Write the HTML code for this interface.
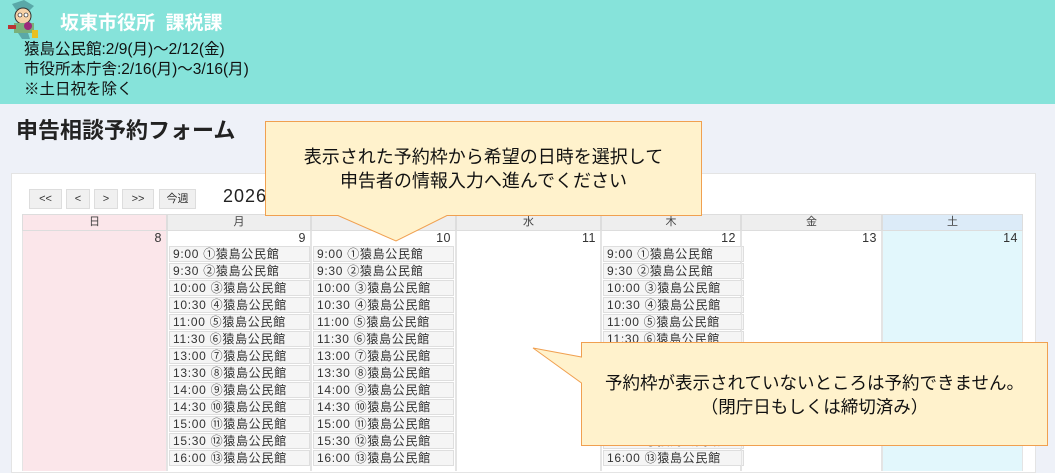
<!DOCTYPE html>
<html><head><meta charset="utf-8"><style>
*{margin:0;padding:0;box-sizing:border-box}
body{width:1055px;height:468px;overflow:hidden;background:#eef1f8;font-family:"Liberation Sans","Noto Sans CJK JP",sans-serif;position:relative}
.abs{position:absolute}
#hdr{left:0;top:0;width:1055px;height:104px;background:#86e3da}
.h1{left:60px;top:8px;color:#fff;font-size:19px;font-weight:bold;white-space:pre}
.sub{left:24px;font-size:15.5px;color:#111;line-height:20px}
.title{left:16px;top:113px;font-size:22px;font-weight:bold;color:#222}
#panel{left:11px;top:173px;width:1025px;height:300px;background:#fff;border:1px solid #e4e4e4}
.btn{top:189px;height:20px;background:#f0f0f0;border:1px solid #ddd;font-size:11px;color:#333;text-align:center;line-height:18px}
.hd{top:214px;height:17px;border:1px solid #ddd;background:#eee;font-size:11px;color:#444;text-align:center;line-height:15px}
.day{top:231px;height:240px;border-left:1px solid #e4e4e4;border-right:1px solid #e4e4e4}
.num{position:absolute;right:4px;top:0;font-size:12.5px;color:#333;line-height:14px;letter-spacing:0.5px}
.slot{position:absolute;left:1px;width:141px;height:16px;background:#f5f5f5;border:1px solid #dedede;font-size:12px;color:#333;line-height:14px;padding-left:3px;white-space:nowrap;letter-spacing:0.7px}
</style></head><body>
<div id="hdr" class="abs"></div>
<svg class="abs" style="left:4px;top:0" width="38" height="40" viewBox="0 0 38 40">
<path d="M8 4 L20 0 L30 6 L26 10 L12 10Z" fill="#5aa8a8"/>
<circle cx="19" cy="16" r="8" fill="#f6d2a8" stroke="#333" stroke-width="1"/>
<circle cx="16" cy="15" r="2" fill="#fff" stroke="#000" stroke-width=".6"/><circle cx="22" cy="15" r="2" fill="#fff" stroke="#000" stroke-width=".6"/>
<rect x="10" y="23" width="20" height="10" fill="#7ab07a"/>
<circle cx="24" cy="26" r="4" fill="#9b2a7b"/>
<rect x="4" y="25" width="8" height="4" fill="#b33"/>
<rect x="28" y="30" width="6" height="8" fill="#e8c020"/>
<path d="M14 33 L18 39 L26 39 L24 33Z" fill="#5aa8a8"/>
</svg>
<div class="abs h1">坂東市役所  課税課</div>
<div class="abs sub" style="top:40px">猿島公民館:2/9(月)～2/12(金)</div>
<div class="abs sub" style="top:60px">市役所本庁舎:2/16(月)～3/16(月)</div>
<div class="abs sub" style="top:80px">※土日祝を除く</div>
<div class="abs title">申告相談予約フォーム</div>
<div id="panel" class="abs"></div>
<div class="abs btn" style="left:29px;width:33px">&lt;&lt;</div>
<div class="abs btn" style="left:66px;width:24px">&lt;</div>
<div class="abs btn" style="left:94px;width:24px">&gt;</div>
<div class="abs btn" style="left:122px;width:32px">&gt;&gt;</div>
<div class="abs btn" style="left:159px;width:37px">今週</div>
<div class="abs" style="left:223px;top:186px;font-size:18px;color:#222;letter-spacing:1px">2026</div>

<div class="abs hd" style="left:22px;width:145px;background:#fbe6ea">日</div>
<div class="abs hd" style="left:167px;width:144px">月</div>
<div class="abs hd" style="left:311px;width:145px">火</div>
<div class="abs hd" style="left:456px;width:145px">水</div>
<div class="abs hd" style="left:601px;width:140px">木</div>
<div class="abs hd" style="left:741px;width:141px">金</div>
<div class="abs hd" style="left:882px;width:141px;background:#dcebf8">土</div>

<div class="abs day" style="left:22px;width:145px;background:#fbe6ea"><span class="num">8</span></div>
<div class="abs day" id="d9" style="left:167px;width:144px"><span class="num">9</span></div>
<div class="abs day" id="d10" style="left:311px;width:145px"><span class="num">10</span></div>
<div class="abs day" style="left:456px;width:145px"><span class="num">11</span></div>
<div class="abs day" id="d12" style="left:601px;width:140px"><span class="num">12</span></div>
<div class="abs day" style="left:741px;width:141px"><span class="num">13</span></div>
<div class="abs day" style="left:882px;width:141px;background:#e2f7fc"><span class="num">14</span></div>

<script>
var t=["9:00 ①","9:30 ②","10:00 ③","10:30 ④","11:00 ⑤","11:30 ⑥","13:00 ⑦","13:30 ⑧","14:00 ⑨","14:30 ⑩","15:00 ⑪","15:30 ⑫","16:00 ⑬"];
["d9","d10","d12"].forEach(function(id){var d=document.getElementById(id),h="";t.forEach(function(s,i){h+='<div class="slot" style="top:'+(15+i*17)+'px">'+s+'猿島公民館</div>'});d.innerHTML+=h;});
</script>

<svg class="abs" style="left:0;top:0" width="1055" height="468">
<path d="M265.5 121.5 H701.5 V215.5 H447 L396 241 L338 215.5 H265.5Z" fill="#fff2cc" stroke="#f0a050"/>
<path d="M581.5 342.5 H1047.5 V445.5 H581.5 V383 L533 348 L581.5 357Z" fill="#fff2cc" stroke="#f0a050"/>
</svg>
<div class="abs" style="left:266px;top:145px;width:435px;font-size:18px;line-height:24px;text-align:center;color:#111">表示された予約枠から希望の日時を選択して<br>申告者の情報入力へ進んでください</div>
<div class="abs" style="left:582px;top:371px;width:465px;font-size:17.5px;line-height:24px;text-align:center;color:#111">予約枠が表示されていないところは予約できません。<br>（閉庁日もしくは締切済み）</div>
</body></html>
